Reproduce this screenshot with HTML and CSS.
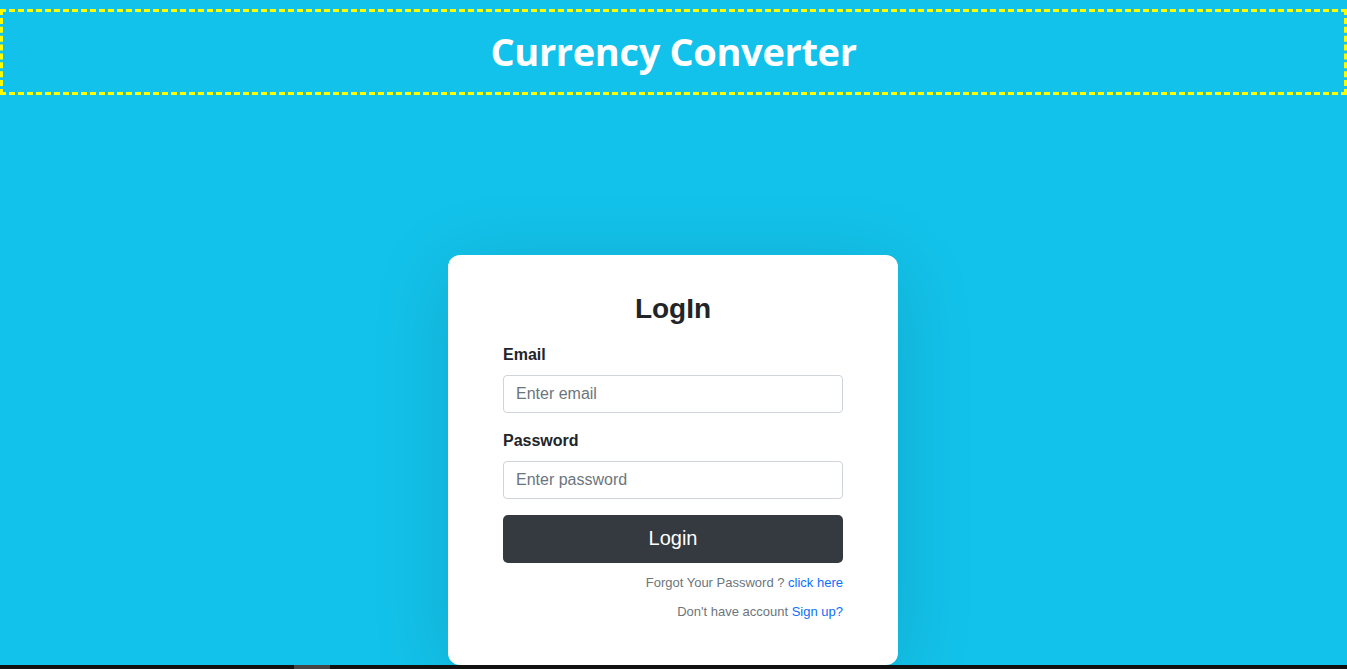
FILE: index.html
```html
<!DOCTYPE html>
<html lang="en">
<head>
<meta charset="utf-8">
<title>Currency Converter</title>
<link rel="stylesheet" href="styles.css">
</head>
<body>
<div class="page">
  <header class="site-header">
    <h1 class="site-title">Currency Converter</h1>
  </header>
  <main class="main">
    <form class="card">
      <h3 class="card-title">LogIn</h3>
      <div class="field">
        <label class="label" for="email">Email</label>
        <input class="input" id="email" type="email" placeholder="Enter email">
      </div>
      <div class="field">
        <label class="label" for="password">Password</label>
        <input class="input" id="password" type="password" placeholder="Enter password">
      </div>
      <button class="btn" type="button">Login</button>
      <p class="note">Forgot Your Password ? <a href="#" class="link">click here</a></p>
      <p class="note">Don't have account <a href="#" class="link">Sign up?</a></p>
    </form>
  </main>
  <div class="bottom-bar"><span class="bottom-thumb"></span></div>
</div>
</body>
</html>
```

FILE: styles.css
```css
* { box-sizing: border-box; }
html, body { margin: 0; padding: 0; }
body {
  background: #13c2ea;
  font-family: "Liberation Sans", Arial, sans-serif;
  color: #212529;
  overflow: hidden;
}
.page {
  height: 669px;
  display: flex;
  flex-direction: column;
  overflow: hidden;
}
.site-header {
  margin-top: 9px;
  height: 86px;
  border: 3px dashed #ffff00;
  display: flex;
  align-items: center;
  justify-content: center;
}
.site-title {
  margin: 0;
  font-family: "Open Sans", "Noto Sans", sans-serif;
  font-weight: 700;
  font-size: 38px;
  line-height: 1.2;
  color: #fff;
  letter-spacing: -0.35px;
}
.main {
  flex: 1;
  display: flex;
  justify-content: center;
  padding-top: 160px;
  padding-right: 1px;
}
.card {
  width: 450px;
  height: 410px;
  background: #fff;
  border-radius: 12px;
  padding: 37px 55px 0;
  box-shadow: 0 12px 80px rgba(0, 0, 0, 0.13);
  display: flex;
  flex-direction: column;
}
.card-title {
  margin: 0 0 17px;
  text-align: center;
  font-size: 28px;
  font-weight: 700;
  line-height: 1.2;
}
.field { margin-bottom: 16px; }
.label {
  display: block;
  font-size: 16px;
  font-weight: 700;
  line-height: 24px;
  margin-bottom: 8px;
}
.input {
  display: block;
  width: 100%;
  height: 38px;
  padding: 6px 12px;
  font-family: "Liberation Sans", Arial, sans-serif;
  font-size: 16px;
  color: #212529;
  border: 1px solid #ced4da;
  border-radius: 4px;
  background: #fff;
}
.input::placeholder { color: #6c757d; }
.btn {
  height: 48px;
  width: 100%;
  border: none;
  border-radius: 5px;
  background: #343a40;
  color: #fff;
  font-family: "Liberation Sans", Arial, sans-serif;
  font-size: 20px;
  margin-bottom: 10px;
}
.note {
  margin: 0 0 9.5px;
  text-align: right;
  font-size: 13px;
  line-height: 19.5px;
  color: #6c757d;
}
.link { color: #0d6efd; text-decoration: none; }
.bottom-bar {
  height: 4px;
  background: #111;
  position: relative;
  flex: none;
}
.bottom-thumb {
  position: absolute;
  left: 294px;
  top: 0;
  width: 36px;
  height: 4px;
  background: #444;
}
```
